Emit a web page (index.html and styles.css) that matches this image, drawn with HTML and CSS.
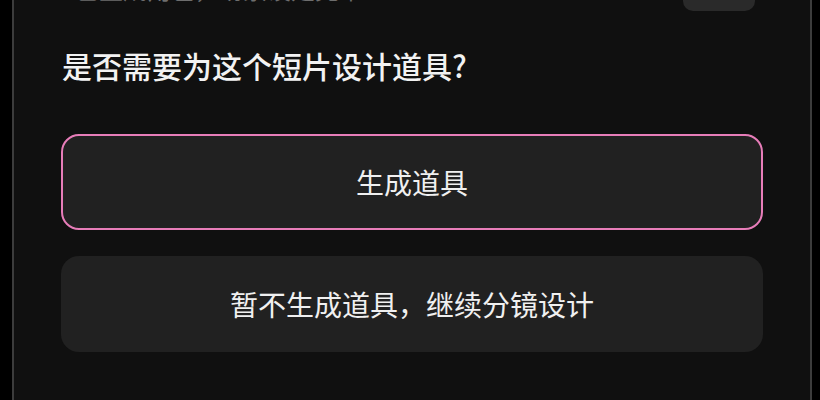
FILE: index.html
```html
<!DOCTYPE html>
<html lang="zh-CN">
<head>
<meta charset="utf-8">
<title>道具设计</title>
<link rel="stylesheet" href="styles.css">
</head>
<body>
<div class="frame">
  <div class="panel">
    <div class="prev-row">
      <span class="prev-text">已生成角色，场景设定完毕</span>
      <span class="prev-btn"></span>
    </div>
    <h2 class="question">是否需要为这个短片设计道具?</h2>
    <div class="options">
      <button class="opt opt-primary">生成道具</button>
      <button class="opt">暂不生成道具，继续分镜设计</button>
    </div>
  </div>
</div>
</body>
</html>
```
FILE: styles.css
```css
html, body {
  margin: 0;
  padding: 0;
  background: #000;
  height: 100%;
  overflow: hidden;
}
.frame {
  height: 400px;
  padding-left: 12px;
  font-family: "Noto Sans CJK SC", "Noto Sans", sans-serif;
}
.panel {
  box-sizing: border-box;
  width: 800px;
  height: 400px;
  background: #101010;
  border-left: 2px solid #3c3c3c;
  border-right: 2px solid #3c3c3c;
  padding: 0 47px;
  overflow: hidden;
}
.prev-row {
  display: flex;
  justify-content: space-between;
  align-items: flex-end;
  height: 40px;
  margin-top: -29px;
  padding-left: 14px;
  padding-right: 8px;
}
.prev-text {
  color: #6e6e6e;
  font-size: 24px;
  line-height: 30px;
  margin-bottom: 7px;
}
.prev-btn {
  width: 72px;
  height: 36px;
  border-radius: 10px;
  background: #2a2a2a;
}
.question {
  margin: 33px 0 0 1px;
  font-size: 30px;
  line-height: 42px;
  font-weight: 500;
  color: #f2f2f2;
}
.options {
  display: flex;
  flex-direction: column;
  gap: 26px;
  margin-top: 48px;
}
.opt {
  height: 96px;
  box-sizing: border-box;
  border-radius: 18px;
  background: #212121;
  border: 2px solid transparent;
  color: #f0f0f0;
  font-family: inherit;
  font-size: 28px;
  font-weight: 400;
  padding: 0;
  text-align: center;
}
.opt-primary {
  border-color: #e77db9;
}
```
